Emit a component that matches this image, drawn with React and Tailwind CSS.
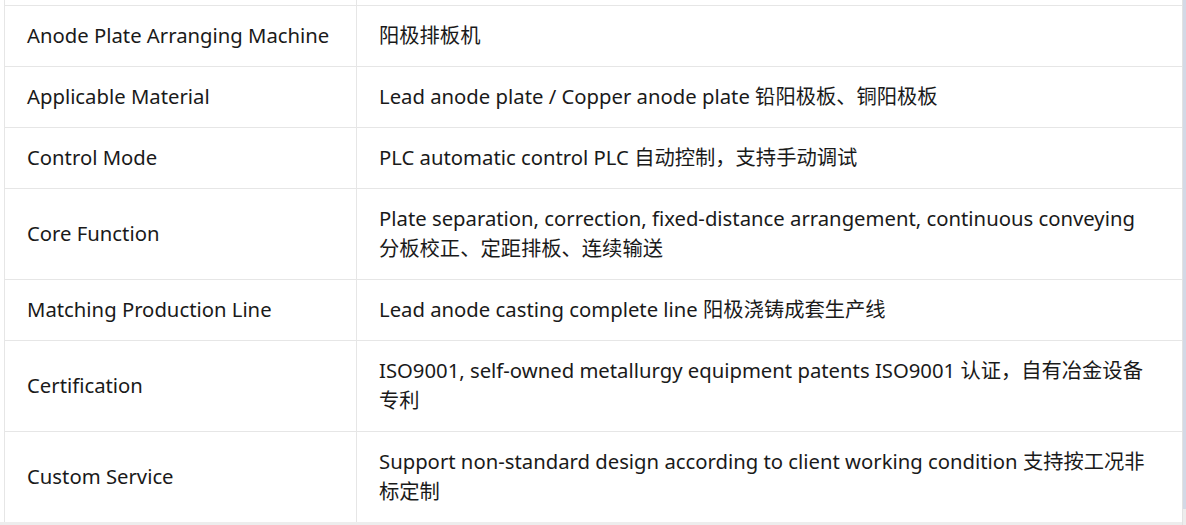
import React from "react";

const rows = [
  { label: "Anode Plate Arranging Machine", value: "阳极排板机" },
  { label: "Applicable Material", value: "Lead anode plate / Copper anode plate 铅阳极板、铜阳极板" },
  { label: "Control Mode", value: "PLC automatic control PLC 自动控制，支持手动调试" },
  { label: "Core Function", value: "Plate separation, correction, fixed-distance arrangement, continuous conveying 分板校正、定距排板、连续输送" },
  { label: "Matching Production Line", value: "Lead anode casting complete line 阳极浇铸成套生产线" },
  { label: "Certification", value: "ISO9001, self-owned metallurgy equipment patents ISO9001 认证，自有冶金设备专利" },
  { label: "Custom Service", value: "Support non-standard design according to client working condition 支持按工况非标定制" },
];

export default function App() {
  return (
    <div
      className="w-[1186px] h-[525px] overflow-hidden bg-[#ededed] flex text-[#1a1a1a]"
      style={{ fontFamily: '"Noto Sans", "Noto Sans CJK SC", sans-serif' }}
    >
      <div className="w-[1182px] shrink-0 h-full flex flex-col bg-white pl-[4px]">
        <table className="w-full table-fixed border-collapse bg-white text-[20.3px] leading-[30px]">
          <tbody>
            {/* tail of the previous row, cut off by the viewport */}
            <tr className="h-[5px]">
              <td className="w-[352px] border-l border-[#e6e6e6] p-0"></td>
              <td className="border-l border-[#e6e6e6] p-0"></td>
            </tr>
            {rows.map((r) => (
              <tr key={r.label} className="border-t border-[#e6e6e6]">
                <td className="w-[352px] border-l border-[#e6e6e6] pl-[22px] pr-2 pt-[14px] pb-[16px] align-middle whitespace-nowrap">
                  {r.label}
                </td>
                <td className="border-l border-[#e6e6e6] pl-[22px] pr-6 pt-[14px] pb-[16px] align-middle">
                  {r.value}
                </td>
              </tr>
            ))}
          </tbody>
        </table>
        <div className="flex-1 bg-[#ededed] -ml-[4px]"></div>
      </div>
      <div className="flex-1 flex flex-col border-l border-[#e2e2e2]">
        <div className="flex-1 bg-[#d3d9e6]"></div>
        <div className="h-[16px] bg-[#ededed]"></div>
      </div>
    </div>
  );
}
